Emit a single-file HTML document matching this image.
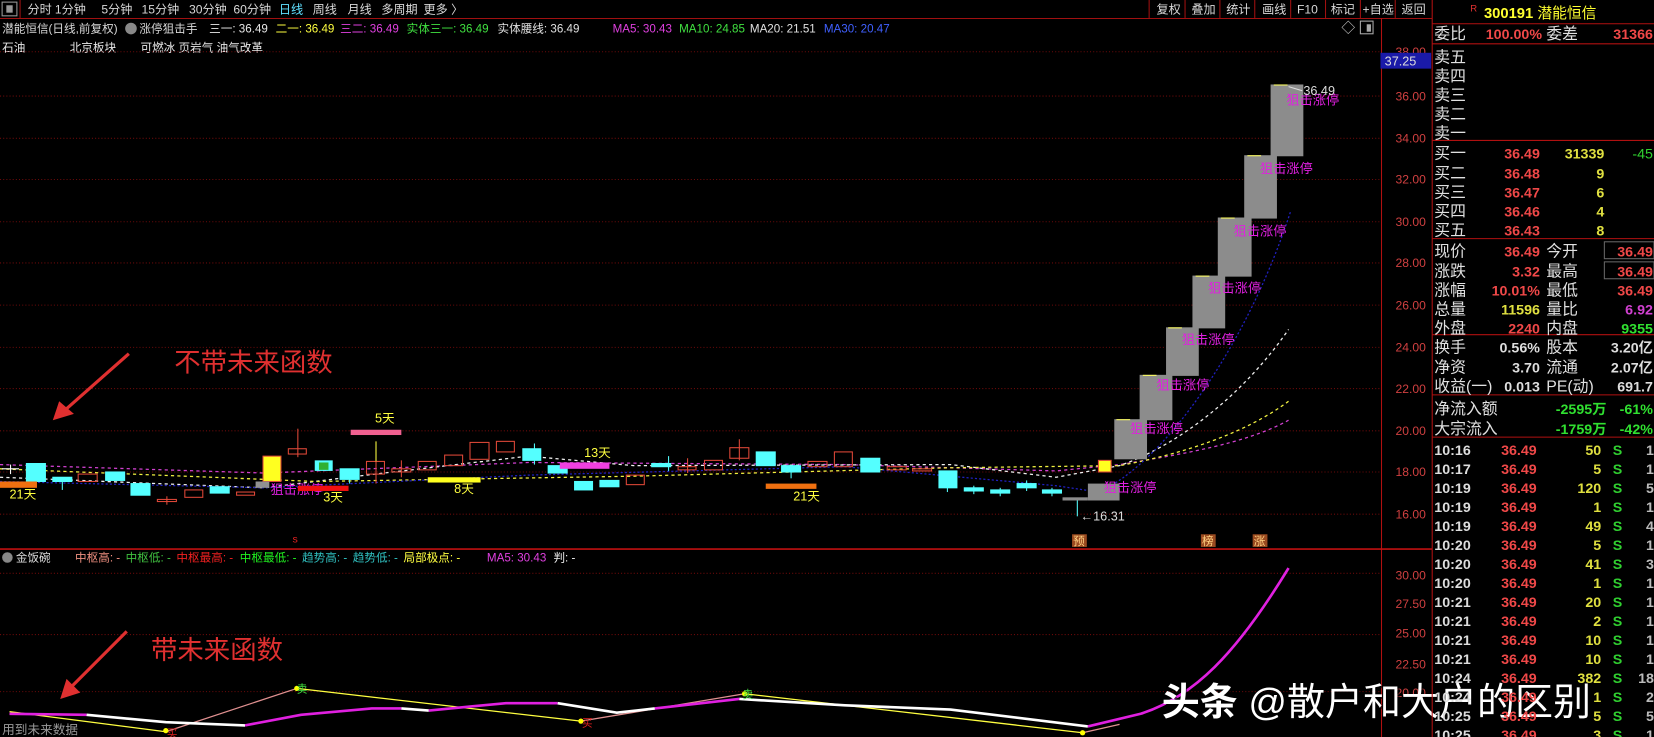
<!DOCTYPE html>
<html><head><meta charset="utf-8"><style>
html,body{margin:0;padding:0;background:#000;overflow:hidden;width:1654px;height:737px}
svg{display:block}
text{font-family:"Liberation Sans","Noto Sans CJK SC",sans-serif}
.tb{font-size:11.5px;fill:#d8d8d8}
.ax{font-size:11.5px;fill:#d04040}
.lb{font-size:15px;fill:#e0e0e0}
.nm{font-size:13.5px;font-weight:bold}
</style></head><body>
<svg width="1654" height="737" viewBox="0 0 1566 698" preserveAspectRatio="none" xmlns="http://www.w3.org/2000/svg">
<rect width="1566" height="698" fill="#000"/>
<rect x="2" y="2" width="14" height="13" fill="none" stroke="#999"/><rect x="6" y="5" width="6" height="7" fill="#999"/>
<line x1="0" y1="17.5" x2="1356" y2="17.5" stroke="#a01010"/>
<line x1="19" y1="0" x2="19" y2="17" stroke="#a01010"/>
<g class="tb">
<text x="26" y="13">分时</text><text x="52" y="13">1分钟</text><text x="96" y="13">5分钟</text><text x="134" y="13">15分钟</text><text x="179" y="13">30分钟</text><text x="221" y="13">60分钟</text>
<text x="264" y="13" fill="#60e0ff">日线</text><text x="296" y="13">周线</text><text x="329" y="13">月线</text><text x="361" y="13">多周期</text><text x="401" y="13">更多 〉</text>
<text x="1095" y="13">复权</text><text x="1128" y="13">叠加</text><text x="1161" y="13">统计</text><text x="1195" y="13">画线</text><text x="1228" y="13">F10</text><text x="1260" y="13">标记</text><text x="1290" y="13">+自选</text><text x="1327" y="13">返回</text>
</g>
<g stroke="#a01010"><line x1="1088" y1="0" x2="1088" y2="17"/><line x1="1122" y1="0" x2="1122" y2="17"/><line x1="1155" y1="0" x2="1155" y2="17"/><line x1="1188" y1="0" x2="1188" y2="17"/><line x1="1222" y1="0" x2="1222" y2="17"/><line x1="1255" y1="0" x2="1255" y2="17"/><line x1="1288" y1="0" x2="1288" y2="17"/><line x1="1321" y1="0" x2="1321" y2="17"/></g>
<g font-size="11">
<text x="2" y="31" fill="#d8d8d8">潜能恒信(日线,前复权)</text>
<circle cx="124" cy="27" r="5.5" fill="#888"/>
<text x="132" y="31" fill="#d8d8d8">涨停狙击手</text>
<text x="198" y="31" fill="#e8e8e8">三一: 36.49</text>
<text x="261" y="31" fill="#ffff40">二一: 36.49</text>
<text x="322" y="31" fill="#e040e0">三二: 36.49</text>
<text x="385" y="31" fill="#40e040">实体三一: 36.49</text>
<text x="471" y="31" fill="#e0e0e0">实体腰线: 36.49</text>
<text x="580" y="31" fill="#e040e0">MA5: 30.43</text>
<text x="643" y="31" fill="#40e040">MA10: 24.85</text>
<text x="710" y="31" fill="#e0e0e0">MA20: 21.51</text>
<text x="780" y="31" fill="#4060ff">MA30: 20.47</text>
<text x="2" y="49" fill="#e8e8e8">石油</text><text x="66" y="49" fill="#e8e8e8">北京板块</text><text x="133" y="49" fill="#e8e8e8">可燃冰 页岩气 油气改革</text>
</g>
<text x="1270" y="31" font-size="13" fill="#ccc">◇</text>
<rect x="1288" y="20" width="12" height="12" fill="none" stroke="#aaa"/><rect x="1294" y="23" width="4" height="7" fill="#aaa"/>
<g stroke="#6a0a0a" stroke-dasharray="1,2">
<line x1="0" y1="49" x2="1306" y2="49"/><line x1="0" y1="91" x2="1306" y2="91"/><line x1="0" y1="131" x2="1306" y2="131"/><line x1="0" y1="170" x2="1306" y2="170"/><line x1="0" y1="210" x2="1306" y2="210"/><line x1="0" y1="249" x2="1306" y2="249"/><line x1="0" y1="289" x2="1306" y2="289"/><line x1="0" y1="329" x2="1306" y2="329"/><line x1="0" y1="368" x2="1306" y2="368"/><line x1="0" y1="408" x2="1306" y2="408"/><line x1="0" y1="447" x2="1306" y2="447"/><line x1="0" y1="487" x2="1306" y2="487"/>
<line x1="0" y1="543" x2="1306" y2="543"/><line x1="0" y1="601" x2="1306" y2="601"/><line x1="0" y1="655" x2="1306" y2="655"/>
</g>
<line x1="1308" y1="17" x2="1308" y2="698" stroke="#b01010"/>
<line x1="0" y1="520" x2="1356" y2="520" stroke="#c01010" stroke-width="1.5"/>
<g class="ax" text-anchor="end">
<text x="1350" y="53">38.00</text><text x="1350" y="95">36.00</text><text x="1350" y="135">34.00</text><text x="1350" y="174">32.00</text><text x="1350" y="214">30.00</text><text x="1350" y="253">28.00</text><text x="1350" y="293">26.00</text><text x="1350" y="333">24.00</text><text x="1350" y="372">22.00</text><text x="1350" y="412">20.00</text><text x="1350" y="451">18.00</text><text x="1350" y="491">16.00</text>
<text x="1350" y="549">30.00</text><text x="1350" y="576">27.50</text><text x="1350" y="604">25.00</text><text x="1350" y="633">22.50</text><text x="1350" y="660">20.00</text>
</g>
<rect x="1307" y="50" width="48" height="15" fill="#1a1aa8"/><text x="1311" y="62" font-size="12" fill="#ddd">37.25</text>
<g fill="none" stroke-dasharray="3,3" stroke-width="1.2">
<path d="M0 440 L250 448 L500 438 L800 440 L1000 446 L1060 440 C1120 430 1180 420 1220 398" stroke="#d040d0"/>
<path d="M0 452 L250 462 L330 452 L500 432 L600 441 L900 440 L1000 452 L1060 441 C1120 420 1180 370 1220 312" stroke="#f0f0f0"/>
<path d="M0 444 L300 456 L600 451 L900 443 L1060 441 C1120 430 1180 410 1220 380" stroke="#f0f040"/>
</g>
<path d="M0 456 L250 462 L500 450 L800 442 L1000 460 L1040 466 C1100 440 1180 330 1222 200" fill="none" stroke="#2020c0" stroke-dasharray="2,2" stroke-width="1.2"/>
<g fill="#54ffff" stroke="#54ffff">
<line x1="59" y1="452" x2="59" y2="464"/><line x1="633" y1="432" x2="633" y2="446"/><line x1="749" y1="441" x2="749" y2="453"/><line x1="897" y1="446" x2="897" y2="466"/><line x1="922" y1="460" x2="922" y2="468"/><line x1="947" y1="462" x2="947" y2="470"/><line x1="972" y1="455" x2="972" y2="465"/><line x1="996" y1="462" x2="996" y2="470"/><line x1="1020" y1="472" x2="1020" y2="489"/><line x1="506" y1="420" x2="506" y2="440"/><line x1="331" y1="444" x2="331" y2="458"/>
<rect x="25" y="439" width="18" height="17"/><rect x="50" y="452" width="18" height="4"/><rect x="100" y="447" width="18" height="8"/><rect x="124" y="458" width="18" height="11"/><rect x="199" y="461" width="18" height="6"/><rect x="322" y="444" width="18" height="10"/><rect x="495" y="425" width="17" height="11"/><rect x="519" y="441" width="18" height="7"/><rect x="544" y="456" width="17" height="8"/><rect x="568" y="455" width="18" height="6"/><rect x="617" y="439" width="18" height="3"/><rect x="716" y="428" width="18" height="13"/><rect x="740" y="441" width="18" height="6"/><rect x="815" y="434" width="18" height="13"/><rect x="889" y="446" width="17" height="16"/><rect x="913" y="462" width="18" height="3"/><rect x="938" y="464" width="18" height="3"/><rect x="963" y="458" width="18" height="4"/><rect x="987" y="464" width="18" height="3"/>
</g>
<g fill="none" stroke="#e04838">
<line x1="282" y1="406" x2="282" y2="433"/><line x1="356" y1="437" x2="356" y2="458"/><line x1="380" y1="436" x2="380" y2="452"/><line x1="700" y1="416" x2="700" y2="436"/><line x1="651" y1="434" x2="651" y2="448"/><line x1="158" y1="470" x2="158" y2="478"/>
<rect x="74" y="449" width="18" height="7"/><rect x="149" y="473" width="18" height="2"/><rect x="175" y="464" width="17" height="7"/><rect x="224" y="466" width="17" height="3"/><rect x="273" y="425" width="17" height="5"/><rect x="347" y="437" width="17" height="12"/><rect x="371" y="444" width="18" height="3"/><rect x="396" y="437" width="17" height="8"/><rect x="421" y="431" width="17" height="10"/><rect x="445" y="419" width="18" height="16"/><rect x="470" y="418" width="17" height="10"/><rect x="593" y="450" width="17" height="9"/><rect x="642" y="442" width="17" height="3"/><rect x="667" y="436" width="17" height="9"/><rect x="691" y="424" width="18" height="10"/><rect x="765" y="437" width="18" height="5"/><rect x="790" y="428" width="17" height="14"/><rect x="840" y="442" width="18" height="3"/><rect x="864" y="444" width="18" height="2"/>
</g>
<line x1="356" y1="418" x2="356" y2="437" stroke="#ffff40"/>
<rect x="249" y="432" width="17" height="24" fill="#ffff20" stroke="#e04838"/>
<rect x="298" y="436" width="17" height="10" fill="#54ffff"/><rect x="302" y="438" width="9" height="7" fill="#30b030"/>
<line x1="2" y1="444" x2="18" y2="444" stroke="#fff"/><line x1="10" y1="440" x2="10" y2="449" stroke="#fff"/>
<rect x="242" y="456" width="13" height="6" fill="#909090"/>
<g fill="#8c8c8c">
<rect x="1006" y="471" width="24" height="3"/><rect x="1030" y="458" width="30" height="16"/>
<rect x="1055" y="397" width="31" height="38"/><rect x="1079" y="355" width="31" height="43"/><rect x="1104" y="310" width="31" height="46"/><rect x="1129" y="261" width="31" height="50"/><rect x="1153" y="206" width="32" height="56"/><rect x="1178" y="147" width="31" height="60"/><rect x="1203" y="80" width="31" height="68"/>
</g>
<g stroke="#ffff60"><line x1="1057" y1="397.5" x2="1070" y2="397.5"/><line x1="1082" y1="355.5" x2="1095" y2="355.5"/><line x1="1106" y1="310.5" x2="1119" y2="310.5"/><line x1="1132" y1="261.5" x2="1145" y2="261.5"/><line x1="1156" y1="206.5" x2="1169" y2="206.5"/><line x1="1181" y1="147.5" x2="1194" y2="147.5"/><line x1="1206" y1="80.5" x2="1219" y2="80.5"/></g>
<rect x="1040" y="436" width="12" height="11" fill="#ffff20" stroke="#e04838"/>
<g font-size="12.5" fill="#e020e0">
<text x="1045" y="466">狙击涨停</text><text x="1070" y="410">狙击涨停</text><text x="1095" y="369">狙击涨停</text><text x="1119" y="326">狙击涨停</text><text x="1144" y="277">狙击涨停</text><text x="1168" y="223">狙击涨停</text><text x="1193" y="164">狙击涨停</text><text x="1218" y="99">狙击涨停</text><text x="256" y="468">狙击涨停</text>
</g>
<text x="1234" y="90" font-size="12" fill="#ddd">36.49</text><path d="M1220 82 L1233 86" stroke="#ddd"/>
<text x="1023" y="493" font-size="12" fill="#ddd">←16.31</text>
<rect x="0" y="456" width="35" height="6" fill="#f07010"/><text x="9" y="472" font-size="12" fill="#ffff40">21天</text>
<rect x="332" y="407" width="48" height="5" fill="#f06090"/><text x="355" y="400" font-size="12" fill="#ffff40">5天</text>
<rect x="282" y="460" width="48" height="5" fill="#f01010"/><text x="306" y="475" font-size="12" fill="#ffff40">3天</text>
<rect x="405" y="452" width="50" height="5" fill="#ffff20"/><text x="430" y="467" font-size="12" fill="#ffff40">8天</text>
<rect x="530" y="438" width="47" height="6" fill="#f040e0"/><text x="553" y="433" font-size="12" fill="#ffff40">13天</text>
<rect x="725" y="458" width="48" height="5" fill="#f07010"/><text x="751" y="474" font-size="12" fill="#ffff40">21天</text>
<text x="277" y="514" font-size="10" fill="#e02020">s</text>
<rect x="1015" y="506" width="14" height="12" fill="#9a4a20"/><text x="1016" y="516" font-size="11" fill="#ffd080">预</text>
<rect x="1137" y="506" width="14" height="12" fill="#9a4a20"/><text x="1138" y="516" font-size="11" fill="#ffd080">榜</text>
<rect x="1186" y="506" width="14" height="12" fill="#9a4a20"/><text x="1187" y="516" font-size="11" fill="#ffd080">涨</text>
<text x="165" y="352" font-size="25" fill="#e03030" font-family="'Noto Serif CJK SC',serif">不带未来函数</text>
<path d="M122 335 L62 388" stroke="#e03030" stroke-width="3"/><path d="M50 398 L56 380 L70 392 Z" fill="#e03030"/>
<text x="143" y="624" font-size="25" fill="#e03030" font-family="'Noto Serif CJK SC',serif">带未来函数</text>
<path d="M120 598 L68 650" stroke="#e03030" stroke-width="3"/><path d="M57 662 L63 643 L76 656 Z" fill="#e03030"/>
<circle cx="7" cy="528" r="5" fill="#888"/>
<g font-size="11">
<text x="15" y="532" fill="#ddd">金饭碗</text>
<text x="71" y="532" fill="#f09080">中枢高: -</text><text x="119" y="532" fill="#40c040">中枢低: -</text><text x="167" y="532" fill="#f02020">中枢最高: -</text><text x="227" y="532" fill="#20f020">中枢最低: -</text><text x="286" y="532" fill="#30c0c0">趋势高: -</text><text x="334" y="532" fill="#30c0c0">趋势低: -</text><text x="382" y="532" fill="#ffff40">局部极点: -</text><text x="461" y="532" fill="#e040e0">MA5: 30.43</text><text x="524" y="532" fill="#eee">判: -</text>
</g>
<g fill="none" stroke-width="1.2">
<path d="M9 674 L157 693" stroke="#ffff40"/><path d="M157 693 L281 652" stroke="#e09090"/><path d="M281 652 L550 683" stroke="#ffff40"/><path d="M550 683 L705 657" stroke="#e09090"/><path d="M705 657 L1025 694" stroke="#ffff40"/><path d="M1025 694 L1060 686" stroke="#e09090"/>
</g>
<g fill="none" stroke-width="2.5">
<path d="M9 676 L82 677" stroke="#e020e0"/>
<path d="M82 677 L157 684 L232 687" stroke="#fff"/>
<path d="M232 687 L285 677 L352 671 L380 671" stroke="#e020e0"/>
<path d="M380 671 L406 673" stroke="#fff"/>
<path d="M406 673 L446 669 L479 666 L528 666" stroke="#e020e0"/>
<path d="M528 666 L584 675 L620 671" stroke="#fff"/>
<path d="M620 671 L700 662" stroke="#e020e0"/>
<path d="M700 662 L800 668 L900 672 L1030 688" stroke="#fff"/>
<path d="M1030 688 L1080 676 C1130 660 1170 620 1220 538" stroke="#e020e0"/>
</g>
<g font-size="10"><circle cx="157" cy="692" r="2.5" fill="#ff0"/><text x="158" y="698" fill="#e02020">买</text>
<circle cx="281" cy="652" r="2.5" fill="#ff0"/><text x="281" y="656" fill="#40e040">卖</text>
<circle cx="550" cy="683" r="2.5" fill="#ff0"/><text x="551" y="688" fill="#e02020">买</text>
<circle cx="705" cy="657" r="2.5" fill="#ff0"/><text x="703" y="661" fill="#40e040">卖</text>
<circle cx="1025" cy="694" r="2.5" fill="#ff0"/></g>
<text x="2" y="695" font-size="12" fill="#999">用到未来数据</text>
<text x="1102" y="679" font-size="36" fill="#000" opacity="0.6">头条 @散户和大户的区别</text>
<text x="1100" y="677" font-size="36" fill="#fff"><tspan font-weight="bold">头条</tspan> @散户和大户的区别</text>
<line x1="1356" y1="0" x2="1356" y2="698" stroke="#b01010"/>
<g stroke="#b01010"><line x1="1356" y1="22.5" x2="1566" y2="22.5"/><line x1="1356" y1="41.5" x2="1566" y2="41.5"/><line x1="1356" y1="133" x2="1566" y2="133"/><line x1="1356" y1="226" x2="1566" y2="226"/><line x1="1356" y1="317" x2="1566" y2="317"/><line x1="1356" y1="374" x2="1566" y2="374"/><line x1="1356" y1="414" x2="1566" y2="414"/></g>
<text x="1392" y="11" font-size="9" fill="#e03030">R</text>
<text x="1405" y="17" font-size="14" font-weight="bold" fill="#ffff30">300191 <tspan font-weight="normal">潜能恒信</tspan></text>
<g class="lb">
<text x="1358" y="37">委比</text><text x="1464" y="37">委差</text>
<text x="1358" y="59">卖五</text><text x="1358" y="77">卖四</text><text x="1358" y="95">卖三</text><text x="1358" y="113">卖二</text><text x="1358" y="131">卖一</text>
<text x="1358" y="150">买一</text><text x="1358" y="169">买二</text><text x="1358" y="187">买三</text><text x="1358" y="205">买四</text><text x="1358" y="223">买五</text>
<text x="1358" y="243">现价</text><text x="1358" y="262">涨跌</text><text x="1358" y="280">涨幅</text><text x="1358" y="298">总量</text><text x="1358" y="316">外盘</text>
<text x="1464" y="243">今开</text><text x="1464" y="262">最高</text><text x="1464" y="280">最低</text><text x="1464" y="298">量比</text><text x="1464" y="316">内盘</text>
<text x="1358" y="334">换手</text><text x="1358" y="353">净资</text><text x="1358" y="371">收益(一)</text>
<text x="1464" y="334">股本</text><text x="1464" y="353">流通</text><text x="1464" y="371">PE(动)</text>
<text x="1358" y="392">净流入额</text><text x="1358" y="411">大宗流入</text>
</g>
<rect x="1519" y="229" width="47" height="16" fill="none" stroke="#666"/><rect x="1519" y="248" width="47" height="16" fill="none" stroke="#666"/>
<g class="nm" text-anchor="end">
<text x="1460" y="37" fill="#f04848">100.00%</text><text x="1565" y="37" fill="#f04848">31366</text>
<text x="1458" y="150" fill="#f04848">36.49</text><text x="1519" y="150" fill="#e0e040">31339</text><text x="1565" y="150" fill="#30d030" font-weight="normal">-45</text>
<text x="1458" y="169" fill="#f04848">36.48</text><text x="1519" y="169" fill="#e0e040">9</text>
<text x="1458" y="187" fill="#f04848">36.47</text><text x="1519" y="187" fill="#e0e040">6</text>
<text x="1458" y="205" fill="#f04848">36.46</text><text x="1519" y="205" fill="#e0e040">4</text>
<text x="1458" y="223" fill="#f04848">36.43</text><text x="1519" y="223" fill="#e0e040">8</text>
<text x="1458" y="243" fill="#f04848">36.49</text><text x="1565" y="243" fill="#f04848">36.49</text>
<text x="1458" y="262" fill="#f04848">3.32</text><text x="1565" y="262" fill="#f04848">36.49</text>
<text x="1458" y="280" fill="#f04848">10.01%</text><text x="1565" y="280" fill="#f04848">36.49</text>
<text x="1458" y="298" fill="#e0e040">11596</text><text x="1565" y="298" fill="#d040d0">6.92</text>
<text x="1458" y="316" fill="#f04848">2240</text><text x="1565" y="316" fill="#30e030">9355</text>
<text x="1458" y="334" fill="#ddd">0.56%</text><text x="1565" y="334" fill="#ddd">3.20亿</text>
<text x="1458" y="353" fill="#ddd">3.70</text><text x="1565" y="353" fill="#ddd">2.07亿</text>
<text x="1458" y="371" fill="#ddd">0.013</text><text x="1565" y="371" fill="#ddd">691.7</text>
<text x="1521" y="392" fill="#30e030">-2595万</text><text x="1565" y="392" fill="#30e030">-61%</text>
<text x="1521" y="411" fill="#30e030">-1759万</text><text x="1565" y="411" fill="#30e030">-42%</text>
</g>
<g class="nm">
<g fill="#ddd"><text x="1358" y="431">10:16</text><text x="1358" y="449">10:17</text><text x="1358" y="467">10:19</text><text x="1358" y="485">10:19</text><text x="1358" y="503">10:19</text><text x="1358" y="521">10:20</text><text x="1358" y="539">10:20</text><text x="1358" y="557">10:20</text><text x="1358" y="575">10:21</text><text x="1358" y="593">10:21</text><text x="1358" y="611">10:21</text><text x="1358" y="629">10:21</text><text x="1358" y="647">10:24</text><text x="1358" y="665">10:24</text><text x="1358" y="683">10:25</text><text x="1358" y="701">10:25</text></g>
<g fill="#f04848" text-anchor="end"><text x="1455" y="431">36.49</text><text x="1455" y="449">36.49</text><text x="1455" y="467">36.49</text><text x="1455" y="485">36.49</text><text x="1455" y="503">36.49</text><text x="1455" y="521">36.49</text><text x="1455" y="539">36.49</text><text x="1455" y="557">36.49</text><text x="1455" y="575">36.49</text><text x="1455" y="593">36.49</text><text x="1455" y="611">36.49</text><text x="1455" y="629">36.49</text><text x="1455" y="647">36.49</text><text x="1455" y="665">36.49</text><text x="1455" y="683">36.49</text><text x="1455" y="701">36.49</text></g>
<g fill="#e0e040" text-anchor="end"><text x="1516" y="431">50</text><text x="1516" y="449">5</text><text x="1516" y="467">120</text><text x="1516" y="485">1</text><text x="1516" y="503">49</text><text x="1516" y="521">5</text><text x="1516" y="539">41</text><text x="1516" y="557">1</text><text x="1516" y="575">20</text><text x="1516" y="593">2</text><text x="1516" y="611">10</text><text x="1516" y="629">10</text><text x="1516" y="647">382</text><text x="1516" y="665">1</text><text x="1516" y="683">5</text><text x="1516" y="701">3</text></g>
<g fill="#30d030"><text x="1527" y="431">S</text><text x="1527" y="449">S</text><text x="1527" y="467">S</text><text x="1527" y="485">S</text><text x="1527" y="503">S</text><text x="1527" y="521">S</text><text x="1527" y="539">S</text><text x="1527" y="557">S</text><text x="1527" y="575">S</text><text x="1527" y="593">S</text><text x="1527" y="611">S</text><text x="1527" y="629">S</text><text x="1527" y="647">S</text><text x="1527" y="665">S</text><text x="1527" y="683">S</text><text x="1527" y="701">S</text></g>
<g fill="#bbb" text-anchor="end"><text x="1566" y="431">1</text><text x="1566" y="449">1</text><text x="1566" y="467">5</text><text x="1566" y="485">1</text><text x="1566" y="503">4</text><text x="1566" y="521">1</text><text x="1566" y="539">3</text><text x="1566" y="557">1</text><text x="1566" y="575">1</text><text x="1566" y="593">1</text><text x="1566" y="611">1</text><text x="1566" y="629">1</text><text x="1566" y="647">18</text><text x="1566" y="665">2</text><text x="1566" y="683">5</text><text x="1566" y="701">1</text></g>
</g>
</svg>
</body></html>
